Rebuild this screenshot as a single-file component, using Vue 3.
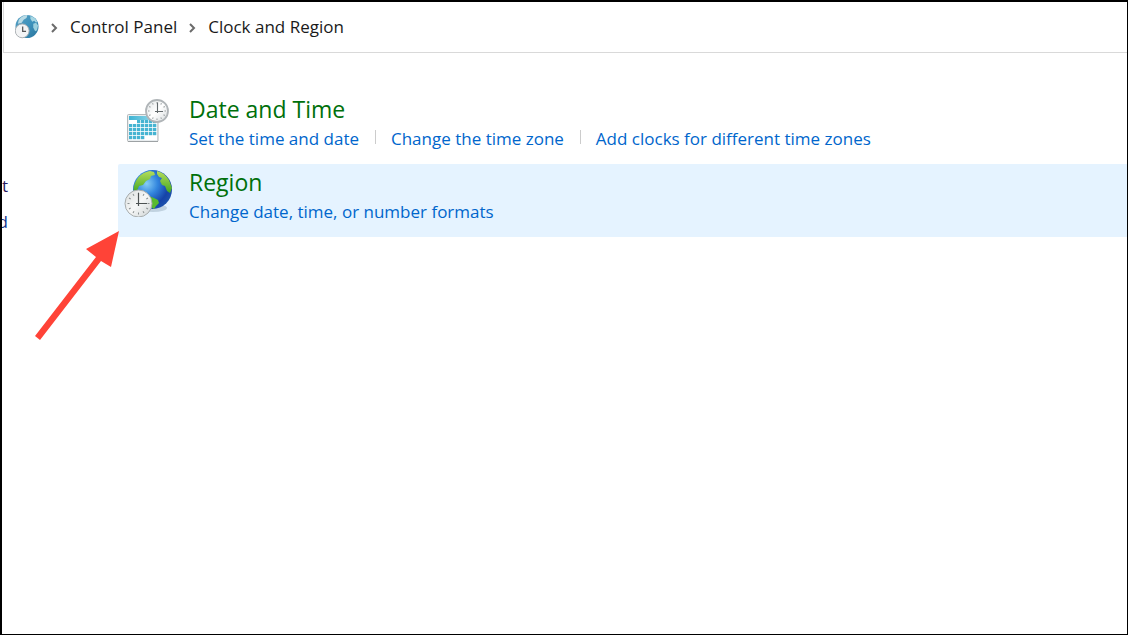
<script setup>
const categories = [
  {
    id: 'date',
    title: 'Date and Time',
    active: false,
    tasks: ['Set the time and date', 'Change the time zone', 'Add clocks for different time zones'],
  },
  {
    id: 'region',
    title: 'Region',
    active: true,
    tasks: ['Change date, time, or number formats'],
  },
]
const days = []
for (let r = 0; r < 5; r++) {
  for (let c = 0; c < 7; c++) {
    if ((r === 0 && c < 2) || (r === 4 && c > 3)) continue
    days.push({ x: 5 + c * 4, y: 25 + r * 4 })
  }
}
const ticks = [0, 30, 60, 90, 120, 150, 180, 210, 240, 270, 300, 330]
</script>

<template>
  <div class="window">
    <nav class="address" aria-label="Breadcrumb">
      <svg class="place" viewBox="1 1 25 25" aria-hidden="true">
        <defs>
          <linearGradient id="sea" x1="0" y1="0" x2="1" y2="1">
            <stop offset="0" stop-color="#5a9fc0" />
            <stop offset="0.5" stop-color="#3d93bd" />
            <stop offset="1" stop-color="#2a739b" />
          </linearGradient>
        </defs>
        <circle cx="13.5" cy="13" r="12" fill="url(#sea)" />
        <path d="M5 6C7 3 11 1 14 1l-1 3-3 2-2 3-4 1z" fill="#b9dbe5" />
        <path d="M17 2c4 1 6 3 7 6l-1 1-2-2-2 1-2-3z" fill="#a7d6e2" />
        <path d="M20 10l3-1 2 3-1 5-2 1-2-4z" fill="#9bd0de" />
        <circle cx="8.5" cy="17.500" r="7.200" fill="#f3f4f5" stroke="#a9afb2" />
        <path d="M9 13V18H12.500" fill="none" stroke="#555" stroke-width="1.300" />
      </svg>
      <svg class="chevron" viewBox="0 0 8 12" aria-hidden="true"><path d="M2 2l4 4-4 4" /></svg>
      <a class="crumb" href="#">Control Panel</a>
      <svg class="chevron" viewBox="0 0 8 12" aria-hidden="true"><path d="M2 2l4 4-4 4" /></svg>
      <a class="crumb" href="#">Clock and Region</a>
    </nav>

    <div class="body">
      <aside class="side">
        <a class="visited" href="#">t</a>
        <a href="#">d</a>
      </aside>

      <main class="list">
        <section v-for="cat in categories" :key="cat.id" class="category" :class="{ active: cat.active }">
          <svg v-if="cat.id === 'date'" class="icon" viewBox="0 0 48 48" aria-hidden="true">
            <defs>
              <linearGradient id="cells" x1="0" y1="0" x2="1" y2="0">
                <stop offset="0" stop-color="#3fb3d3" />
                <stop offset="1" stop-color="#9bdcec" />
              </linearGradient>
              <linearGradient id="face" x1="0" y1="0" x2="1" y2="1">
                <stop offset="0" stop-color="#dfe3e4" />
                <stop offset="0.5" stop-color="#ffffff" />
                <stop offset="1" stop-color="#d5dadc" />
              </linearGradient>
            </defs>
            <rect x="3.500" y="18.500" width="30.500" height="27" rx="1" fill="#e9edef" stroke="#b4b8ba" />
            <path d="M4 45.500H34" stroke="#9da2a4" />
            <rect x="5" y="20" width="28" height="24" fill="#ffffff" />
            <rect x="5" y="20" width="28" height="4" fill="url(#cells)" />
            <rect v-for="d in days" :key="d.x + '-' + d.y" :x="d.x" :y="d.y - 1" width="3.300" height="3.200" fill="#46b4d2" />
            <circle cx="33" cy="15" r="11" fill="url(#face)" stroke="#b0b5b8" stroke-width="1.800" />
            <path
              v-for="t in ticks" :key="t" d="M33 6V7.500"
              stroke="#979d9f" :transform="`rotate(${t} 33 15)`"
            />
            <path d="M33.500 6.500V17M31 15.500H39" fill="none" stroke="#62696c" stroke-width="1.100" />
          </svg>

          <svg v-else class="icon" viewBox="0 0 48 48" aria-hidden="true">
            <defs>
              <radialGradient id="ocean" cx="0.35" cy="0.35" r="0.7">
                <stop offset="0" stop-color="#86cdf5" />
                <stop offset="0.4" stop-color="#3386de" />
                <stop offset="0.8" stop-color="#1643a8" />
                <stop offset="1" stop-color="#1c50ac" />
              </radialGradient>
              <linearGradient id="land" x1="0" y1="0" x2="0" y2="1">
                <stop offset="0" stop-color="#b5dc5c" />
                <stop offset="1" stop-color="#43a822" />
              </linearGradient>
              <linearGradient id="dial" x1="0" y1="0" x2="1" y2="1">
                <stop offset="0" stop-color="#d9dddd" />
                <stop offset="0.5" stop-color="#f6f7f7" />
                <stop offset="1" stop-color="#ced3d4" />
              </linearGradient>
            </defs>
            <ellipse cx="29" cy="39" rx="14" ry="4" fill="#a9bccb" opacity="0.6" />
            <circle cx="28.500" cy="20.500" r="19.500" fill="url(#ocean)" />
            <path d="M12 12C15 6 20 3 26 2l4 1 1 3-4 1-1 3-4 2-3 4-4 1-2 5-3 1c-1-4 0-7 2-11z" fill="url(#land)" />
            <path d="M33 2c5 1 9 4 12 9l3 8-2 5-3-2-2-5-3-1-2-4 2-3-3-1-2-3z" fill="url(#land)" />
            <path d="M25 27l5 2 4 2 1 3-3 3-2 3-3-2-3-6z" fill="#58bb2e" />
            <circle cx="14.500" cy="34.500" r="13.500" fill="url(#dial)" stroke="#a8adae" />
            <path
              v-for="t in ticks" :key="t" d="M14.500 23.500V25.500"
              stroke="#8b9192" :transform="`rotate(${t} 14.500 34.500)`"
            />
            <path d="M14.500 24V37M12 34.500H23" fill="none" stroke="#4c5152" stroke-width="1.200" />
          </svg>

          <div class="text">
            <h2><a href="#">{{ cat.title }}</a></h2>
            <ul>
              <li v-for="task in cat.tasks" :key="task"><a href="#">{{ task }}</a></li>
            </ul>
          </div>
        </section>
      </main>
    </div>

    <svg class="pointer" viewBox="0 0 90 112" aria-hidden="true">
      <path d="M84 1L76 37 66 31 5 110 0 106 61 27 51 19z" fill="#ff4337" />
    </svg>
  </div>
</template>

<style>
body {
  margin: 0;
}
</style>

<style scoped>
.window {
  position: relative;
  box-sizing: border-box;
  min-height: 100vh;
  border: solid #000;
  border-width: 2px 1px 1px 2px;
  background: #fff;
  font-family: "Open Sans", "Noto Sans", sans-serif;
  overflow: hidden;
}
a {
  text-decoration: none;
}
.address {
  display: flex;
  align-items: center;
  box-sizing: border-box;
  height: 51px;
  margin-left: 1px;
  padding: 0 0 1px 11px;
  border: solid #d9d9d9;
  border-width: 0 0 1px 1px;
}
.place {
  width: 24px;
  height: 24px;
}
.chevron {
  width: 8px;
  height: 12px;
  margin: 3px 12px 0 11px;
  fill: none;
  stroke: #6b6b6b;
  stroke-width: 2;
}
.crumb {
  color: #1a1a1a;
  font-size: 17px;
  line-height: 24px;
}
.body {
  display: flex;
  padding-top: 38px;
}
.side {
  display: flex;
  flex-direction: column;
  align-items: flex-end;
  gap: 12px;
  width: 6px;
  margin-right: 110px;
  padding-top: 83px;
}
.side a {
  color: #14368c;
  font-size: 17px;
  line-height: 24px;
}
.side .visited {
  color: #2a1a5e;
}
.list {
  flex: 1;
  min-width: 0;
}
.category {
  display: flex;
  gap: 17px;
  height: 73px;
  padding-left: 6px;
  border-radius: 2px 0 0 2px;
}
.active {
  background: #e5f3ff;
}
.icon {
  flex: none;
  width: 48px;
  height: 48px;
  margin-top: 5px;
}
h2 {
  margin: 0;
  font-size: 23px;
  font-weight: 400;
  line-height: 36px;
}
h2 a {
  color: #00700b;
}
ul {
  display: flex;
  margin: 0;
  padding: 0;
  list-style: none;
}
li {
  display: flex;
  font-size: 17px;
  line-height: 24px;
}
li + li::before {
  content: "";
  width: 1px;
  height: 14px;
  margin: 3px 15px 0 16px;
  background: #ccc;
}
li a {
  color: #0066cc;
}
.pointer {
  position: absolute;
  left: 33px;
  top: 228px;
  width: 90px;
  height: 112px;
}
</style>
